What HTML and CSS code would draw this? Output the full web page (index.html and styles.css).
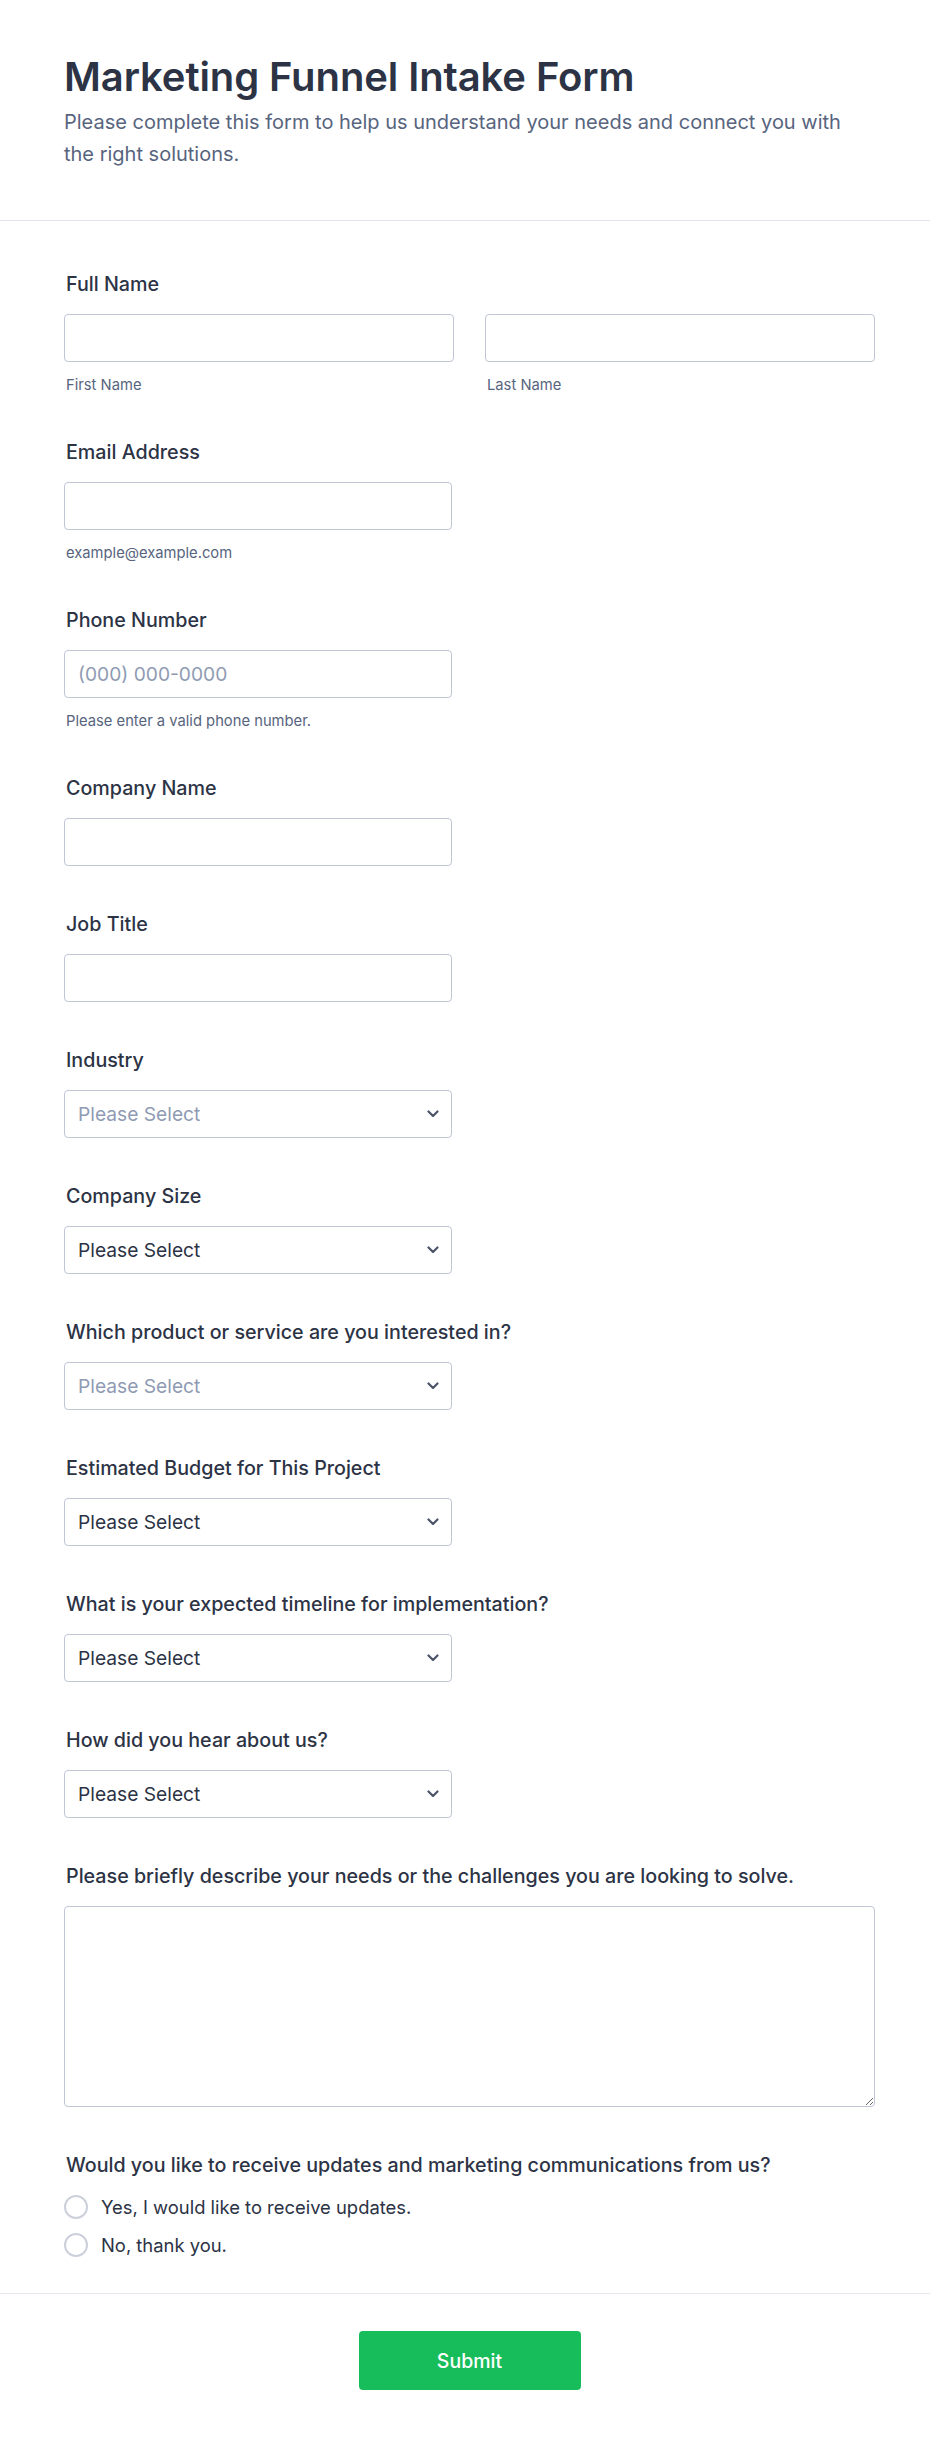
FILE: index.html
```html
<!DOCTYPE html>
<html lang="en">
<head>
<meta charset="utf-8">
<title>Marketing Funnel Intake Form</title>
<link rel="stylesheet" href="styles.css">
</head>
<body>
<form class="form">
  <header class="form-header">
    <h1 class="form-title">Marketing Funnel Intake Form</h1>
    <p class="form-desc">Please complete this form to help us understand your needs and connect you with the right solutions.</p>
  </header>

  <div class="form-body">
    <div class="field">
      <label class="label">Full Name</label>
      <div class="name-row">
        <div class="name-col">
          <input class="input input-full" type="text">
          <span class="sublabel">First Name</span>
        </div>
        <div class="name-col">
          <input class="input input-full" type="text">
          <span class="sublabel">Last Name</span>
        </div>
      </div>
    </div>

    <div class="field">
      <label class="label">Email Address</label>
      <input class="input" type="email">
      <span class="sublabel">example@example.com</span>
    </div>

    <div class="field">
      <label class="label">Phone Number</label>
      <input class="input" type="tel" placeholder="(000) 000-0000">
      <span class="sublabel">Please enter a valid phone number.</span>
    </div>

    <div class="field">
      <label class="label">Company Name</label>
      <input class="input" type="text">
    </div>

    <div class="field">
      <label class="label">Job Title</label>
      <input class="input" type="text">
    </div>

    <div class="field">
      <label class="label">Industry</label>
      <div class="select-wrap">
        <select class="select is-placeholder"><option>Please Select</option></select>
        <svg class="chevron" width="12" height="8" viewBox="0 0 12 8"><path d="M1.5 1.5 L6 6 L10.5 1.5" fill="none" stroke="#4b5569" stroke-width="2.2" stroke-linecap="round" stroke-linejoin="round"/></svg>
      </div>
    </div>

    <div class="field">
      <label class="label">Company Size</label>
      <div class="select-wrap">
        <select class="select"><option>Please Select</option></select>
        <svg class="chevron" width="12" height="8" viewBox="0 0 12 8"><path d="M1.5 1.5 L6 6 L10.5 1.5" fill="none" stroke="#4b5569" stroke-width="2.2" stroke-linecap="round" stroke-linejoin="round"/></svg>
      </div>
    </div>

    <div class="field">
      <label class="label">Which product or service are you interested in?</label>
      <div class="select-wrap">
        <select class="select is-placeholder"><option>Please Select</option></select>
        <svg class="chevron" width="12" height="8" viewBox="0 0 12 8"><path d="M1.5 1.5 L6 6 L10.5 1.5" fill="none" stroke="#4b5569" stroke-width="2.2" stroke-linecap="round" stroke-linejoin="round"/></svg>
      </div>
    </div>

    <div class="field">
      <label class="label">Estimated Budget for This Project</label>
      <div class="select-wrap">
        <select class="select"><option>Please Select</option></select>
        <svg class="chevron" width="12" height="8" viewBox="0 0 12 8"><path d="M1.5 1.5 L6 6 L10.5 1.5" fill="none" stroke="#4b5569" stroke-width="2.2" stroke-linecap="round" stroke-linejoin="round"/></svg>
      </div>
    </div>

    <div class="field">
      <label class="label">What is your expected timeline for implementation?</label>
      <div class="select-wrap">
        <select class="select"><option>Please Select</option></select>
        <svg class="chevron" width="12" height="8" viewBox="0 0 12 8"><path d="M1.5 1.5 L6 6 L10.5 1.5" fill="none" stroke="#4b5569" stroke-width="2.2" stroke-linecap="round" stroke-linejoin="round"/></svg>
      </div>
    </div>

    <div class="field">
      <label class="label">How did you hear about us?</label>
      <div class="select-wrap">
        <select class="select"><option>Please Select</option></select>
        <svg class="chevron" width="12" height="8" viewBox="0 0 12 8"><path d="M1.5 1.5 L6 6 L10.5 1.5" fill="none" stroke="#4b5569" stroke-width="2.2" stroke-linecap="round" stroke-linejoin="round"/></svg>
      </div>
    </div>

    <div class="field">
      <label class="label">Please briefly describe your needs or the challenges you are looking to solve.</label>
      <textarea class="textarea"></textarea>
    </div>

    <div class="field field-last">
      <label class="label">Would you like to receive updates and marketing communications from us?</label>
      <div class="radio-list">
        <label class="radio-row"><span class="radio"></span><span class="radio-text">Yes, I would like to receive updates.</span></label>
        <label class="radio-row"><span class="radio"></span><span class="radio-text">No, thank you.</span></label>
      </div>
    </div>
  </div>

  <footer class="form-footer">
    <button class="submit" type="button">Submit</button>
  </footer>
</form>
</body>
</html>
```

FILE: styles.css
```css
* { box-sizing: border-box; }

html, body {
  margin: 0;
  padding: 0;
  background: #ffffff;
}

body {
  font-family: Inter, "Noto Sans", "Liberation Sans", sans-serif;
  color: #2c3345;
}

.form {
  width: 930px;
}

.form-header {
  padding: 53px 55px 50px 64px;
  border-bottom: 1px solid #e1e3ec;
}

.form-title {
  margin: 0;
  font-size: 40px;
  line-height: 48px;
  font-weight: 600;
  color: #2c3345;
  letter-spacing: -0.1px;
}

.form-desc {
  margin: 5px 0 0;
  font-size: 20px;
  line-height: 32px;
  color: #57647e;
  max-width: 800px;
}

.form-body {
  padding: 50px 55px 36px 64px;
}

.field {
  display: flex;
  flex-direction: column;
  align-items: flex-start;
  margin-bottom: 45px;
}

.field-last {
  margin-bottom: 0;
}

.label {
  display: block;
  padding-left: 2px;
  font-size: 19.7px;
  line-height: 27px;
  font-weight: 500;
  color: #2c3345;
  margin-bottom: 16px;
}

.name-row {
  display: grid;
  grid-template-columns: 390px 390px;
  column-gap: 31px;
  width: 100%;
}

.name-col {
  display: flex;
  flex-direction: column;
}

.input,
.select,
.textarea {
  font-family: Inter, "Noto Sans", "Liberation Sans", sans-serif;
  font-size: 19.2px;
  color: #2c3345;
  background: #ffffff;
  border: 1px solid #bfc5d3;
  border-radius: 4px;
  outline: none;
}

.input {
  width: 388px;
  height: 48px;
  padding: 0 13px;
}

.input-full {
  width: 390px;
}

.input::placeholder {
  color: #8f9bb3;
}

.sublabel {
  display: block;
  padding-left: 2px;
  margin-top: 15px;
  font-size: 14.75px;
  line-height: 17px;
  color: #57647e;
}

.select-wrap {
  position: relative;
  width: 388px;
  height: 48px;
}

.select {
  -webkit-appearance: none;
  appearance: none;
  width: 100%;
  height: 48px;
  padding: 0 40px 0 13px;
  color: #2c3345;
}

.select.is-placeholder {
  color: #8f9bb3;
}

.chevron {
  position: absolute;
  right: 13px;
  top: 20px;
  pointer-events: none;
}

.textarea {
  display: block;
  width: 811px;
  height: 201px;
  padding: 12px 13px;
  resize: both;
}

.radio-list {
  display: flex;
  flex-direction: column;
  gap: 14px;
}

.radio-row {
  display: flex;
  align-items: center;
  gap: 13px;
  height: 24px;
}

.radio {
  width: 24px;
  height: 24px;
  border-radius: 50%;
  border: 2px solid #ccd0da;
  background: #ffffff;
  flex: none;
}

.radio-text {
  font-size: 18.4px;
  line-height: 24px;
  color: #2c3345;
}

.form-footer {
  border-top: 1px solid #e6e7f0;
  padding: 37px 55px 50px 64px;
  display: flex;
  justify-content: center;
}

.submit {
  width: 222px;
  height: 59px;
  border: none;
  border-radius: 4px;
  background: #18bd5b;
  color: #ffffff;
  font-family: Inter, "Noto Sans", "Liberation Sans", sans-serif;
  font-size: 19.5px;
  font-weight: 500;
}
```
